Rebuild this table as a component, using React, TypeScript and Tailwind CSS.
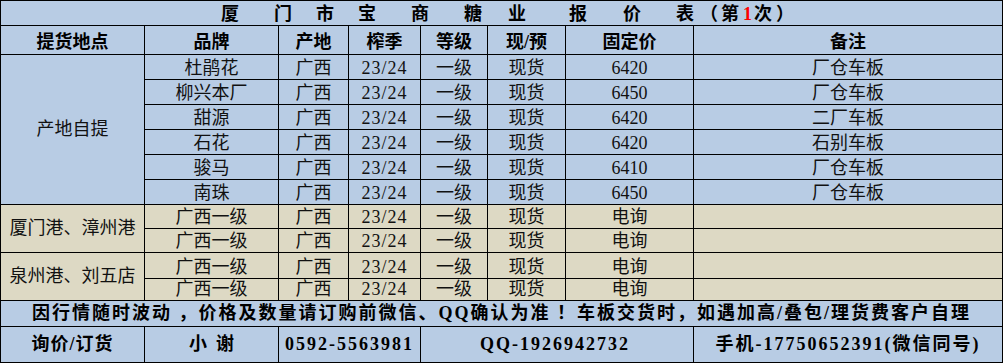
import React from "react";

const FONT = "font-['Liberation_Serif','Noto_Sans_CJK_SC',serif]";
const BLUE = "bg-[#b8cce4]";
const BEIGE = "bg-[#ddd9c4]";

type Row = { brand: string; price: string; note: string };

const pickupRows: Row[] = [
  { brand: "杜鹃花", price: "6420", note: "厂仓车板" },
  { brand: "柳兴本厂", price: "6450", note: "厂仓车板" },
  { brand: "甜源", price: "6420", note: "二厂车板" },
  { brand: "石花", price: "6420", note: "石别车板" },
  { brand: "骏马", price: "6410", note: "厂仓车板" },
  { brand: "南珠", price: "6450", note: "厂仓车板" },
];

const titleChars: { ch: string; ml: string }[] = [
  { ch: "厦", ml: "ml-0" },
  { ch: "门", ml: "ml-[35px]" },
  { ch: "市", ml: "ml-[24px]" },
  { ch: "宝", ml: "ml-[24px]" },
  { ch: "商", ml: "ml-[35px]" },
  { ch: "糖", ml: "ml-[35px]" },
  { ch: "业", ml: "ml-[26px]" },
  { ch: "报", ml: "ml-[43px]" },
  { ch: "价", ml: "ml-[36px]" },
  { ch: "表", ml: "ml-[35px]" },
];

const Cell: React.FC<{
  children?: React.ReactNode;
  className?: string;
}> = ({ children, className = "" }) => (
  <div
    className={`flex items-end justify-center overflow-hidden whitespace-nowrap border-r border-b border-black text-[18px] leading-[21px] ${className}`}
  >
    {children}
  </div>
);

const headers = ["提货地点", "品牌", "产地", "榨季", "等级", "现/预", "固定价", "备注"];

export default function App() {
  return (
    <div className={`w-[1003px] h-[364px] bg-white ${FONT}`}>
      <div className="grid grid-cols-[144px_134px_70px_72px_67px_78px_128px_309px] grid-rows-[25px_29px_25px_25px_25px_25px_25px_25px_24px_24px_26px_22px_26px_36px] border-l border-t border-black text-[#111]">
        {/* title */}
        <div className={`col-span-8 flex items-end border-r border-b border-black ${BLUE} pl-[220px] text-[18px] leading-[22px] font-bold text-black`}>
          {titleChars.map((t) => (
            <span key={t.ch} className={t.ml}>
              {t.ch}
            </span>
          ))}
          <span className="ml-[6px]">（</span>
          <span className="ml-[3px]">第</span>
          <span className="ml-[4px] text-[#ff0000]">1</span>
          <span className="ml-[2px]">次</span>
          <span className="ml-[4px]">）</span>
        </div>

        {/* header */}
        {headers.map((h) => (
          <Cell key={h} className={`${BLUE} font-bold text-black pb-[1px]`}>
            {h}
          </Cell>
        ))}

        {/* pickup at origin */}
        <Cell className={`${BLUE} row-span-6 !items-center`}>产地自提</Cell>
        {pickupRows.map((r) => (
          <React.Fragment key={r.brand}>
            <Cell className={BLUE}>{r.brand}</Cell>
            <Cell className={BLUE}>广西</Cell>
            <Cell className={`${BLUE} tracking-[1px]`}>23/24</Cell>
            <Cell className={BLUE}>一级</Cell>
            <Cell className={BLUE}>现货</Cell>
            <Cell className={BLUE}>{r.price}</Cell>
            <Cell className={BLUE}>{r.note}</Cell>
          </React.Fragment>
        ))}

        {/* ports */}
        {["厦门港、漳州港", "泉州港、刘五店"].map((port) =>
          [0, 1].map((i) => (
            <React.Fragment key={port + i}>
              {i === 0 && (
                <Cell className={`${BEIGE} row-span-2 !items-center`}>{port}</Cell>
              )}
              <Cell className={BEIGE}>广西一级</Cell>
              <Cell className={BEIGE}>广西</Cell>
              <Cell className={`${BEIGE} tracking-[1px]`}>23/24</Cell>
              <Cell className={BEIGE}>一级</Cell>
              <Cell className={BEIGE}>现货</Cell>
              <Cell className={BEIGE}>电询</Cell>
              <Cell className={BEIGE} />
            </React.Fragment>
          ))
        )}

        {/* note */}
        <Cell className={`${BLUE} col-span-8 !items-center font-bold text-black tracking-[2px]`}>
          因行情随时波动 ，价格及数量请订购前微信、QQ确认为准 ！车板交货时，如遇加高/叠包/理货费客户自理
        </Cell>

        {/* contact */}
        <Cell className={`${BLUE} !items-center font-bold text-black tracking-[1px]`}>询价/订货</Cell>
        <Cell className={`${BLUE} !items-center font-bold text-black`}>小&nbsp;&nbsp;谢</Cell>
        <Cell className={`${BLUE} col-span-2 !items-center font-bold text-black tracking-[2px]`}>
          0592-5563981
        </Cell>
        <Cell className={`${BLUE} col-span-3 !items-center font-bold text-black tracking-[2px] !justify-start pl-[59px]`}>
          QQ-1926942732
        </Cell>
        <Cell className={`${BLUE} !items-center font-bold text-black tracking-[2px]`}>
          手机-17750652391(微信同号)
        </Cell>
      </div>
    </div>
  );
}
